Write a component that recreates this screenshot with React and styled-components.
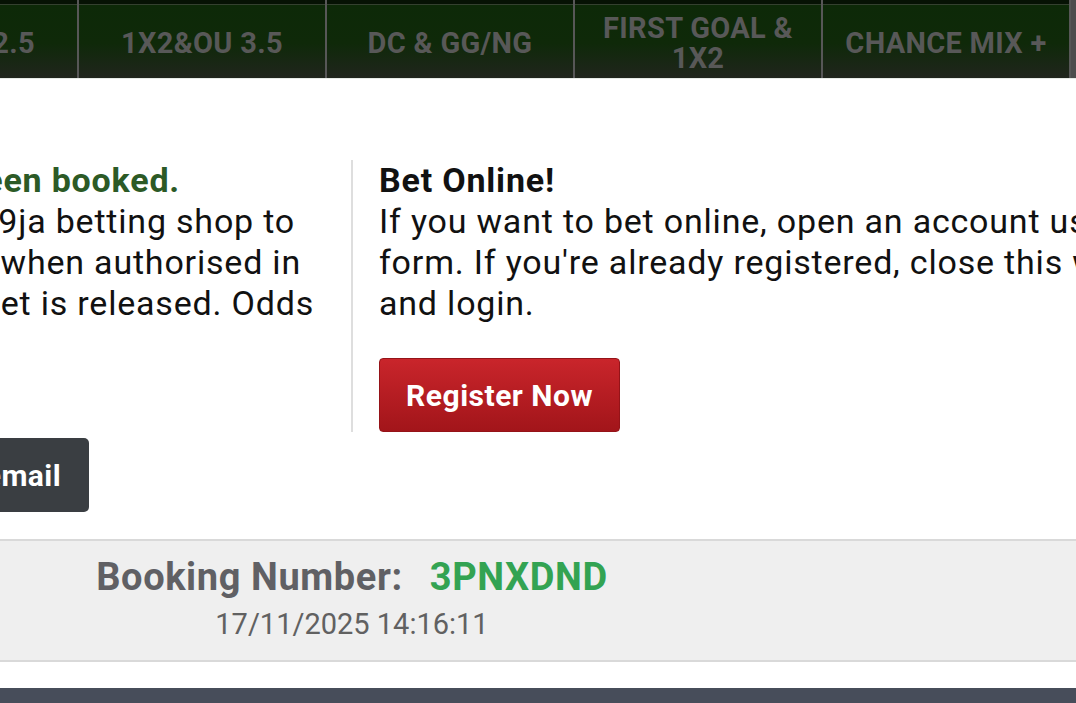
import React from 'react'
import styled, { createGlobalStyle } from 'styled-components'

const GlobalStyle = createGlobalStyle`
  body {
    margin: 0;
    background: #ffffff;
    font-family: Roboto, "Liberation Sans", Arial, sans-serif;
  }
`

const tabs = ['1X2&OU 2.5', '1X2&OU 3.5', 'DC & GG/NG', 'FIRST GOAL & 1X2', 'CHANCE MIX +']

// how far each visible line of the clipped left text stops short of the column edge
const leftLines = [
  { text: 'Take this booking number to any Bet9ja betting shop to', inset: 30 },
  { text: 'place the bet. The bet is only valid when authorised in', inset: 24 },
  { text: 'the shop and until the bet is released. Odds', inset: 11 },
]

const Viewport = styled.div`
  position: relative;
  width: 1076px;
  height: 703px;
  overflow: hidden;
  background: #ffffff;
`

const TabStrip = styled.div`
  display: flex;
  height: 78px;
  margin-left: -169px;
  background: linear-gradient(
    to bottom,
    #061204 0,
    #061204 4px,
    #34402f 4px,
    #34402f 5px,
    #0d2908 5px,
    #0f2909 55%,
    #20251d 100%
  );
  border-bottom: 1px solid #e6ebe6;
`

const Tab = styled.div`
  flex: 0 0 248px;
  box-sizing: border-box;
  border-right: 2px solid #575757;
  display: flex;
  align-items: center;
  justify-content: center;
  padding: 7px 14px 0;
  text-align: center;
  color: #585858;
  font-size: 29px;
  font-weight: 700;
  letter-spacing: 0.3px;
  line-height: 30px;
`

const TabEdge = styled.div`
  flex: 1;
  background: #4d4d4d;
`

const Modal = styled.div`
  width: 1504px;
  margin-left: -400px;
  padding-top: 81px;
  background: #ffffff;
`

const Columns = styled.div`
  display: flex;
  align-items: flex-start;
  padding: 0 40px;
`

const LeftCol = styled.div`
  flex: 1;
  min-width: 0;
  padding-right: 26px;
  display: flex;
  flex-direction: column;
  align-items: flex-end;
`

const RightCol = styled.div`
  flex: 1;
  min-width: 0;
  padding-left: 26px;
  border-left: 2px solid #dedede;
  display: flex;
  flex-direction: column;
  align-items: flex-start;
`

const Line = styled.div`
  white-space: nowrap;
  font-size: 34px;
  letter-spacing: 0.8px;
  line-height: 41px;
  color: ${p => (p.$green ? '#2c5a26' : '#111111')};
  font-weight: ${p => (p.$bold ? 700 : 400)};
  margin-right: ${p => p.$inset || 0}px;
`

const EmailButton = styled.button`
  margin-top: 114px;
  margin-right: 236px;
  height: 74px;
  padding: 0 28px;
  border: 0;
  border-radius: 5px;
  background: #3a3e42;
  color: #ffffff;
  font-family: inherit;
  font-size: 30px;
  letter-spacing: 0.4px;
  font-weight: 700;
  white-space: nowrap;
`

const RegisterButton = styled.button`
  margin-top: 34px;
  width: 241px;
  height: 74px;
  padding: 0;
  border: 1px solid #951318;
  border-radius: 4px;
  background: linear-gradient(to bottom, #c9252b, #a2151a);
  color: #ffffff;
  font-family: inherit;
  font-size: 30px;
  letter-spacing: 0.5px;
  font-weight: 700;
`

const BookingBand = styled.div`
  margin-top: 27px;
  padding: 14px 0 18px;
  background: #efefef;
  border-top: 2px solid #d9d9d9;
  border-bottom: 2px solid #d9d9d9;
  display: flex;
  flex-direction: column;
  align-items: center;
  gap: 7px;
`

const BookingRow = styled.div`
  display: flex;
  align-items: baseline;
  gap: 27px;
  font-size: 38px;
  letter-spacing: 0.6px;
  line-height: 44px;
  font-weight: 700;
`

const BookingLabel = styled.span`
  color: #606064;
`

const BookingCode = styled.span`
  color: #33a352;
`

const BookingDate = styled.div`
  font-size: 29px;
  line-height: 36px;
  color: #616161;
`

const Footer = styled.div`
  margin-top: 26px;
  height: 60px;
  background: #474d5a;
`

export default function App() {
  return (
    <Viewport>
      <GlobalStyle />
      <TabStrip>
        {tabs.map(t => (
          <Tab key={t}>{t}</Tab>
        ))}
        <TabEdge />
      </TabStrip>
      <Modal>
        <Columns>
          <LeftCol>
            <Line $bold $green $inset={145}>Your bet has been booked.</Line>
            {leftLines.map(l => (
              <Line key={l.text} $inset={l.inset}>{l.text}</Line>
            ))}
            <EmailButton>Send by email</EmailButton>
          </LeftCol>
          <RightCol>
            <Line $bold>Bet Online!</Line>
            <Line>If you want to bet online, open an account using this</Line>
            <Line>form. If you're already registered, close this window</Line>
            <Line>and login.</Line>
            <RegisterButton>Register Now</RegisterButton>
          </RightCol>
        </Columns>
        <BookingBand>
          <BookingRow>
            <BookingLabel>Booking Number:</BookingLabel>
            <BookingCode>3PNXDND</BookingCode>
          </BookingRow>
          <BookingDate>17/11/2025 14:16:11</BookingDate>
        </BookingBand>
        <Footer />
      </Modal>
    </Viewport>
  )
}
